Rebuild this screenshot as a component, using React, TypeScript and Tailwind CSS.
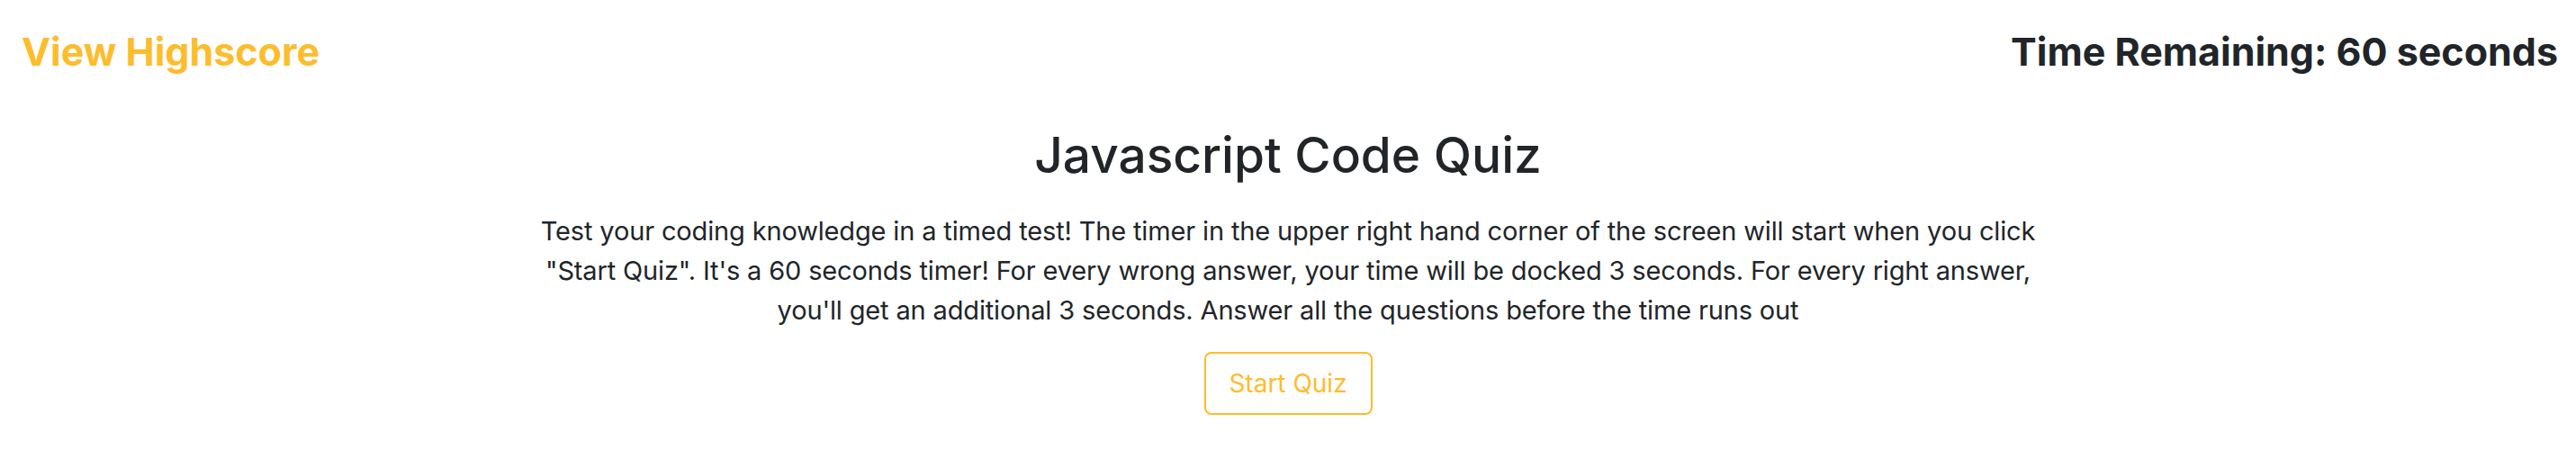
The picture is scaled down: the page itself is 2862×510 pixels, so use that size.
export default function App() {
  return (
    <div className="min-h-[510px] bg-white text-[#212529]" style={{ fontFamily: 'Inter, "Noto Sans", sans-serif' }}>
      <header className="flex items-start justify-between pl-[24px] pr-[20px] pt-[32px]">
        <a href="#" className="text-[43px] font-bold leading-[1.2] text-[#fcbd2d]">
          View Highscore
        </a>
        <h4 className="text-[43px] font-bold leading-[1.2]">Time Remaining: 60 seconds</h4>
      </header>

      <main className="mt-[55px] flex flex-col items-center text-center">
        <h1 className="text-[55px] font-medium leading-[1.2]">Javascript Code Quiz</h1>
        <p className="mt-[30px] w-[1690px] text-[29px] leading-[44px] tracking-[-0.15px]">
          Test your coding knowledge in a timed test! The timer in the upper right hand corner of the screen will
          start when you click "Start Quiz". It's a 60 seconds timer! For every wrong answer, your time will be
          docked 3 seconds. For every right answer, you'll get an additional 3 seconds. Answer all the questions
          before the time runs out
        </p>
        <button className="mt-[24px] h-[70px] w-[187px] rounded-[8px] border-2 border-[#fcbd2d] text-[28px] text-[#fcbd2d]">
          Start Quiz
        </button>
      </main>
    </div>
  )
}
